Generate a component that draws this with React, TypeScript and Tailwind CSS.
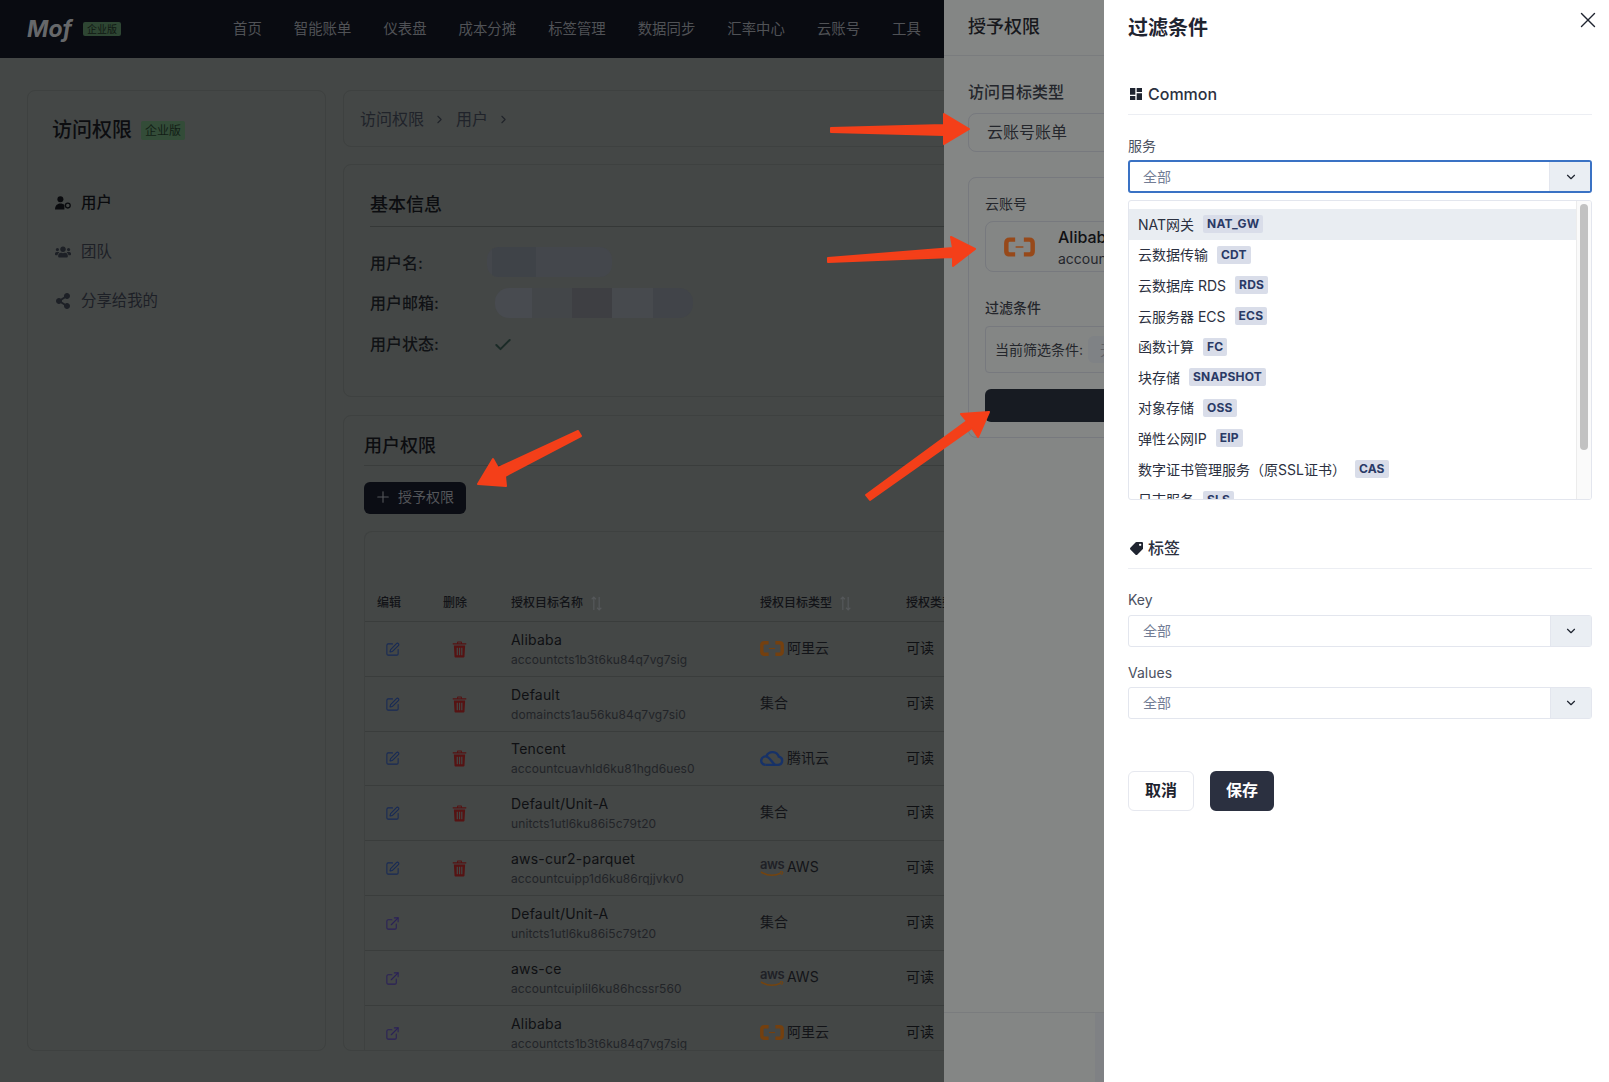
import { ExternalLink, SquarePen, Plus, Check, ChevronDown, ChevronRight, X } from "lucide-react"
import { FaShareAlt, FaTag, FaUsers } from "react-icons/fa"
import { MdDashboard } from "react-icons/md"

const FONT = "font-['Inter','Noto_Sans_CJK_SC',sans-serif]"

const NAV = ["首页", "智能账单", "仪表盘", "成本分摊", "标签管理", "数据同步", "汇率中心", "云账号", "工具"]

type Vendor = "ali" | "tencent" | "aws" | "set"
type Row = { name: string; id: string; vendor: Vendor; own: boolean; h: string }

const ROWS: Row[] = [
  { name: "Alibaba", id: "accountcts1b3t6ku84q7vg7sig", vendor: "ali", own: true, h: "h-[55px]" },
  { name: "Default", id: "domaincts1au56ku84q7vg7si0", vendor: "set", own: true, h: "h-[55px]" },
  { name: "Tencent", id: "accountcuavhld6ku81hgd6ues0", vendor: "tencent", own: true, h: "h-[54px]" },
  { name: "Default/Unit-A", id: "unitcts1utl6ku86i5c79t20", vendor: "set", own: true, h: "h-[55px]" },
  { name: "aws-cur2-parquet", id: "accountcuipp1d6ku86rqjjvkv0", vendor: "aws", own: true, h: "h-[55px]" },
  { name: "Default/Unit-A", id: "unitcts1utl6ku86i5c79t20", vendor: "set", own: false, h: "h-[55px]" },
  { name: "aws-ce", id: "accountcuiplil6ku86hcssr560", vendor: "aws", own: false, h: "h-[55px]" },
  { name: "Alibaba", id: "accountcts1b3t6ku84q7vg7sig", vendor: "ali", own: false, h: "h-[55px]" },
]

const SERVICES = [
  ["NAT网关", "NAT_GW"],
  ["云数据传输", "CDT"],
  ["云数据库 RDS", "RDS"],
  ["云服务器 ECS", "ECS"],
  ["函数计算", "FC"],
  ["块存储", "SNAPSHOT"],
  ["对象存储", "OSS"],
  ["弹性公网IP", "EIP"],
  ["数字证书管理服务（原SSL证书）", "CAS"],
  ["日志服务", "SLS"],
]

function AliLogo({ className, color }: { className: string; color: string }) {
  return (
    <svg viewBox="0 0 32 20" className={className} fill="none" stroke={color}>
      <path d="M11.5 2.4H6Q2.4 2.4 2.4 6v8q0 3.6 3.6 3.6h5.5" strokeWidth="4.6" />
      <path d="M20.5 2.4H26q3.6 0 3.6 3.6v8q0 3.6-3.6 3.6h-5.5" strokeWidth="4.6" />
      <path d="M12 10h8" strokeWidth="1.5" />
    </svg>
  )
}

function TencentLogo() {
  return (
    <svg viewBox="0 0 26 20" className="w-[24px] h-[19px]" fill="none" stroke="#173268" strokeWidth="2.6">
      <path d="M6 18h13.4a4.5 4.5 0 0 0 1-8.9A7.2 7.2 0 0 0 7 8.4" />
      <path d="M6 18a4.6 4.6 0 1 1 2.2-8.6c3 1.6 5 6 8 8.6" />
    </svg>
  )
}

function AwsLogo() {
  return (
    <div className="relative w-[24px] h-[19px]">
      <span className="absolute left-0 top-[-2px] text-[13px] leading-[16px] font-semibold tracking-[-0.5px] text-[#1f2127]">aws</span>
      <svg viewBox="0 0 24 6" className="absolute left-0 top-[13px] w-[24px] h-[6px]" fill="none" stroke="#74440f" strokeWidth="1.5">
        <path d="M1 1q10 6 20 1" />
        <path d="M20 .6l3 .4-1.4 3" strokeWidth="1" />
      </svg>
    </div>
  )
}

function Vendor({ vendor }: { vendor: Vendor }) {
  if (vendor === "set") return <span className="-mt-[2px] text-sm text-[#131418]">集合</span>
  return (
    <div className="-mt-[2px] flex items-center gap-[3px] text-sm text-[#131418]">
      {vendor === "ali" && <AliLogo className="w-[24px] h-[17px]" color="#74400f" />}
      {vendor === "tencent" && <TencentLogo />}
      {vendor === "aws" && <AwsLogo />}
      <span>{vendor === "ali" ? "阿里云" : vendor === "tencent" ? "腾讯云" : "AWS"}</span>
    </div>
  )
}

function Trash() {
  return (
    <svg viewBox="0 0 16 18" className="w-[15px] h-[17px]" fill="#561313">
      <path d="M5.4 2.4V1.2C5.4.6 5.8.4 6.2.4h3.6c.4 0 .8.2.8.8v1.2h4.6v1.3H.8V2.4zm1.1 0h3V1.4h-3z" />
      <path fillRule="evenodd" d="M2 4.6h12l-.7 11.8c0 .8-.6 1.2-1.2 1.2H3.9c-.6 0-1.2-.4-1.2-1.2zM5 7v8h1.3V7zm2.4 0v8h1.3V7zm2.4 0v8h1.3V7z" />
    </svg>
  )
}

function SortIcon() {
  return (
    <svg viewBox="0 0 12 14" className="w-[13px] h-[15px] ml-[7px]" fill="none" stroke="#55585a" strokeWidth="1.1">
      <path d="M3.5 13V1M1.5 3l2-2 2 2" />
      <path d="M8.5 1v12M6.5 11l2 2 2-2" />
    </svg>
  )
}

function SelectBox({ focused }: { focused?: boolean }) {
  return (
    <div className={`flex items-stretch rounded-[3px] bg-white ${focused ? "h-[33px] border-2 border-[#3a72c4]" : "h-[32px] border border-[#e3e6ee]"}`}>
      <span className={`flex-1 flex items-center text-sm text-[#737d95] ${focused ? "pl-[13px]" : "pl-[14px]"}`}>全部</span>
      <span className={`w-[41px] flex items-center justify-center bg-[#eaeef3] border-l border-[#e3e6ee] ${focused ? "pl-[2px]" : ""}`}>
        <ChevronDown size={14} strokeWidth={2} className="text-[#1f2430]" />
      </span>
    </div>
  )
}

function SectionTitle({ icon, text }: { icon: React.ReactNode; text: string }) {
  return (
    <div className="flex items-center gap-[4px] h-[41px] border-b border-[#eceef3] text-base font-medium text-[#2b3040]">
      <span className="w-[16px] flex items-center justify-center">{icon}</span>
      <span>{text}</span>
    </div>
  )
}

function Arrow({ points }: { points: string }) {
  return (
    <svg viewBox="0 0 1609 1082" className="absolute inset-0 w-[1609px] h-[1082px] pointer-events-none" fill="#f43f19" stroke="#f43f19" strokeWidth="2" strokeLinejoin="round">
      <polygon points={points} />
    </svg>
  )
}

export default function App() {
  return (
    <div className={`relative w-full h-[1082px] overflow-hidden bg-[#444746] ${FONT}`}>
      <header className="h-[58px] flex items-center bg-[#090b11] pl-[27px]">
        <span className="w-[45px] text-[23px] font-bold italic leading-none text-[#66686a]">Mof</span>
        <span className="ml-[11px] h-[14px] px-[4px] rounded-[2px] bg-[#2e4633] text-[10px] leading-[14px] text-[#101712]">企业版</span>
        <nav className="flex gap-[32px] ml-[112px] text-[14.4px] text-[#505256]">
          {NAV.map(n => <span key={n}>{n}</span>)}
        </nav>
      </header>

      <main className="flex gap-[17px] pl-[27px] pt-[32px] h-[993px]">
        <aside className="w-[299px] shrink-0 rounded-lg border border-[#3e4140] px-[24px] pt-[25px]">
          <div className="flex items-center gap-[9px]">
            <h1 className="text-xl font-medium text-[#0c0d10]">访问权限</h1>
            <span className="h-[19px] px-[4px] rounded-[2px] bg-[#334c38] text-xs leading-[19px] text-[#121e16]">企业版</span>
          </div>
          <ul className="mt-[34px] text-[15.4px]">
            <li className="flex items-center h-[49px] gap-[10px] pl-[3px] font-medium text-[#0a0b0e]">
              <span className="relative w-[16px] h-[14px]">
                <svg viewBox="0 0 16 14" className="w-[16px] h-[14px]" fill="#0a0b0e">
                  <circle cx="5.4" cy="3.2" r="3" />
                  <path d="M0 13.4c0-3.8 2.2-6 5.4-6 1.6 0 3 .5 4 1.5v4.5z" />
                  <circle cx="12.8" cy="9.6" r="2.4" fill="none" stroke="#0a0b0e" strokeWidth="1.3" />
                </svg>
              </span>
              用户
            </li>
            <li className="flex items-center h-[49px] gap-[10px] pl-[3px] text-[#1d2026]">
              <FaUsers size={16} />
              团队
            </li>
            <li className="flex items-center h-[49px] gap-[10px] pl-[3px] text-[#1d2026]">
              <FaShareAlt size={16} />
              分享给我的
            </li>
          </ul>
        </aside>

        <section className="w-[1240px] shrink-0 flex flex-col">
          <div className="h-[57px] shrink-0 flex items-center pl-[16px] pt-[1px] rounded-lg border border-[#3e4140] text-base text-[#20232a]">
            访问权限
            <ChevronRight size={13} className="ml-[9px] mr-[10px]" />
            用户
            <ChevronRight size={13} className="ml-[9px]" />
          </div>

          <div className="h-[233px] shrink-0 mt-[17px] rounded-lg border border-[#3e4140] pl-[26px] pt-[24px]">
            <h2 className="h-[38px] border-b border-[#353837] text-lg font-medium leading-[32px] text-[#0c0d10]">基本信息</h2>
            <dl className="mt-[16px] text-base font-medium text-[#101215]">
              <div className="flex items-center h-[40px]">
                <dt className="w-[117px]">用户名:</dt>
                <dd className="relative h-[30px] w-[125px] -mt-[3px] rounded-[12px] bg-[#44474c] overflow-hidden">
                  <span className="block w-[44px] h-full ml-[5px] bg-[#3f4348]" />
                </dd>
              </div>
              <div className="flex items-center h-[40px]">
                <dt className="w-[125px]">用户邮箱:</dt>
                <dd className="flex h-[30px] w-[198px] rounded-[14px] overflow-hidden">
                  <span className="w-[37px] bg-[#484b50]" />
                  <span className="w-[40px] bg-[#434649]" />
                  <span className="w-[40px] bg-[#3e3f43]" />
                  <span className="w-[41px] bg-[#474a4e]" />
                  <span className="w-[40px] bg-[#414449]" />
                </dd>
              </div>
              <div className="flex items-center h-[41px] pt-[1px]">
                <dt className="w-[123px]">用户状态:</dt>
                <dd className="pt-[2px]"><Check size={20} strokeWidth={2.4} className="text-[#1b2b27]" /></dd>
              </div>
            </dl>
          </div>

          <div className="flex-1 min-h-0 mt-[18px] rounded-lg border border-[#3e4140] pl-[20px] pt-[14px] overflow-hidden">
            <h2 className="h-[36px] border-b border-[#3a3d3c] text-lg font-medium leading-[32px] text-[#0c0d10]">用户权限</h2>
            <button type="button" className="mt-[16px] flex items-center gap-[6px] h-[32px] w-[102px] pl-[10px] pb-[2px] rounded-md bg-[#0b0d14] text-sm text-[#54565a]">
              <Plus size={18} strokeWidth={1.5} />
              授予权限
            </button>
            <div className="mt-[17px] rounded-t-lg border-l border-t border-[#3e4140]">
              <div className="grid grid-cols-[66px_68px_249px_146px_1fr] items-end h-[90px] pl-[12px] pb-[9px] border-b border-[#3a3d3c] text-xs font-medium leading-[18px] text-[#121317]">
                <span>编辑</span>
                <span>删除</span>
                <span className="flex items-center">授权目标名称<SortIcon /></span>
                <span className="flex items-center">授权目标类型<SortIcon /></span>
                <span>授权类型</span>
              </div>
              {ROWS.map((r, i) => (
                <div key={i} className={`grid grid-cols-[66px_68px_249px_146px_1fr] items-center pl-[12px] border-b border-[#3a3d3c] ${r.h}`}>
                  <span className="pl-[8px]">
                    {r.own
                      ? <SquarePen size={15} strokeWidth={1.7} className="text-[#172a56]" />
                      : <ExternalLink size={15} strokeWidth={1.7} className="text-[#2a2158]" />}
                  </span>
                  <span className="pl-[9px]">{r.own && <Trash />}</span>
                  <div>
                    <div className="text-sm leading-[20px] tracking-[0.2px] text-[#0f1013]">{r.name}</div>
                    <div className="text-xs leading-[19px] tracking-[0.1px] text-[#222428]">{r.id}</div>
                  </div>
                  <Vendor vendor={r.vendor} />
                  <span className="-mt-[2px] text-sm text-[#0f1013]">可读</span>
                </div>
              ))}
            </div>
          </div>
        </section>
      </main>

      {/* 授予权限 drawer, sits under the filter drawer */}
      <div className="absolute left-[944px] top-0 bottom-0 w-[160px] flex flex-col bg-[#848685] overflow-hidden">
        <div className="h-[56px] shrink-0 border-b border-[#7a7c7e] pl-[24px] pt-[13px] text-lg font-medium leading-[28px] text-[#17181c] whitespace-nowrap">授予权限</div>
        <div className="flex-1 w-[500px] pl-[24px] pt-[24px]">
          <div className="text-base font-medium leading-[24px] text-[#24262c]">访问目标类型</div>
          <div className="mt-[9px] h-[39px] flex items-center pl-[18px] pb-[2px] rounded-lg border border-[#77797e] text-base text-[#24262c]">云账号账单</div>
          <div className="mt-[25px] h-[261px] rounded-lg border border-[#77797e] px-[16px] pt-[16px]">
            <div className="text-sm leading-[20px] text-[#24262c]">云账号</div>
            <div className="mt-[7px] h-[51px] flex items-center pl-[18px] gap-[23px] rounded-lg border border-[#77797e]">
              <AliLogo className="w-[31px] h-[20px]" color="#97491a" />
              <div className="pt-[3px]">
                <div className="text-base font-medium leading-[22px] text-[#101114]">Alibaba</div>
                <div className="text-sm leading-[22px] text-[#24262c]">accountcts1b3t6ku84q7vg7sig</div>
              </div>
            </div>
            <div className="mt-[26px] text-sm font-medium leading-[20px] text-[#24262c]">过滤条件</div>
            <div className="mt-[8px] h-[47px] flex items-center pl-[9px] gap-[5px] rounded-[4px] border border-[#77797e] text-sm text-[#24262c]">
              当前筛选条件:
              <span className="h-[27px] px-[12px] rounded-md bg-[#7f8285] leading-[27px] text-[#5f6165]">无</span>
            </div>
            <div className="mt-[16px] h-[33px] rounded-md bg-[#171b22]" />
          </div>
        </div>
        <div className="h-[70px] shrink-0 flex border-t border-[#7a7c7e]">
          <span className="w-[151px]" />
          <span className="w-[9px] bg-[#7f8184]" />
        </div>
      </div>

      {/* 过滤条件 drawer */}
      <div className="absolute left-[1104px] right-0 top-0 bottom-0 bg-white pl-[24px] pr-[17px]">
        <X size={26} strokeWidth={1.3} className="absolute right-[8px] top-[7px] text-[#1f2430]" />
        <h3 className="pt-[14px] text-xl font-semibold leading-[28px] text-[#1f2430]">过滤条件</h3>

        <div className="mt-[32px]">
          <SectionTitle icon={<MdDashboard size={16} className="text-[#1f2430]" />} text="Common" />
        </div>
        <div className="mt-[20px] text-sm leading-[21px] text-[#4b5160]">服务</div>
        <div className="mt-[4px]"><SelectBox focused /></div>

        <div className="relative mt-[7px] h-[300px] rounded-[3px] border border-[#e3e6ee] pt-[8px] overflow-hidden">
          <div className="absolute right-0 top-0 bottom-0 w-[15px] bg-[#fafafa] border-l border-[#ececec]">
            <div className="mt-[3px] ml-[3px] w-[8px] h-[246px] rounded-full bg-[#c2c2c2]" />
          </div>
          {SERVICES.map(([label, code], i) => (
            <div key={code} className={`flex items-center h-[30.6px] mr-[14px] pl-[9px] text-sm text-[#2b3040] ${i === 0 ? "bg-[#e9edf2]" : ""}`}>
              <span className="whitespace-nowrap pt-[1px]">{label}</span>
              <span className="ml-[9px] h-[18px] px-[4px] rounded-[2px] bg-[#d9dde9] text-xs font-bold leading-[18px] tracking-[0.2px] text-[#2a3a66]">{code}</span>
            </div>
          ))}
        </div>

        <div className="mt-[28px]">
          <SectionTitle icon={<FaTag size={13} className="rotate-90 text-[#1f2430]" />} text="标签" />
        </div>
        <div className="mt-[20px] text-sm leading-[21px] text-[#4b5160]">Key</div>
        <div className="mt-[5px]"><SelectBox /></div>
        <div className="mt-[15px] text-sm leading-[21px] text-[#4b5160]">Values</div>
        <div className="mt-[4px]"><SelectBox /></div>

        <div className="mt-[52px] flex gap-[16px]">
          <button type="button" className="h-[40px] w-[66px] rounded-md border border-[#e6e8ef] bg-white pb-[2px] text-base font-semibold text-[#1f2430]">取消</button>
          <button type="button" className="h-[40px] w-[64px] rounded-md bg-[#2b3040] pb-[2px] text-base font-semibold text-white">保存</button>
        </div>
      </div>

      {/* annotation arrows pasted over the screenshot */}
      <Arrow points="831,128 944,125 944,114 969,129 944,144 944,135 831,132" />
      <Arrow points="828,258 953,248 951,237 975,249 953,266 953,257 828,262" />
      <Arrow points="870,500 972,428 978,437 989,412 961,414 967,421 866,495" />
      <Arrow points="581,436 505,476 506,486 478,484 493,459 498,468 578,431" />
    </div>
  )
}
